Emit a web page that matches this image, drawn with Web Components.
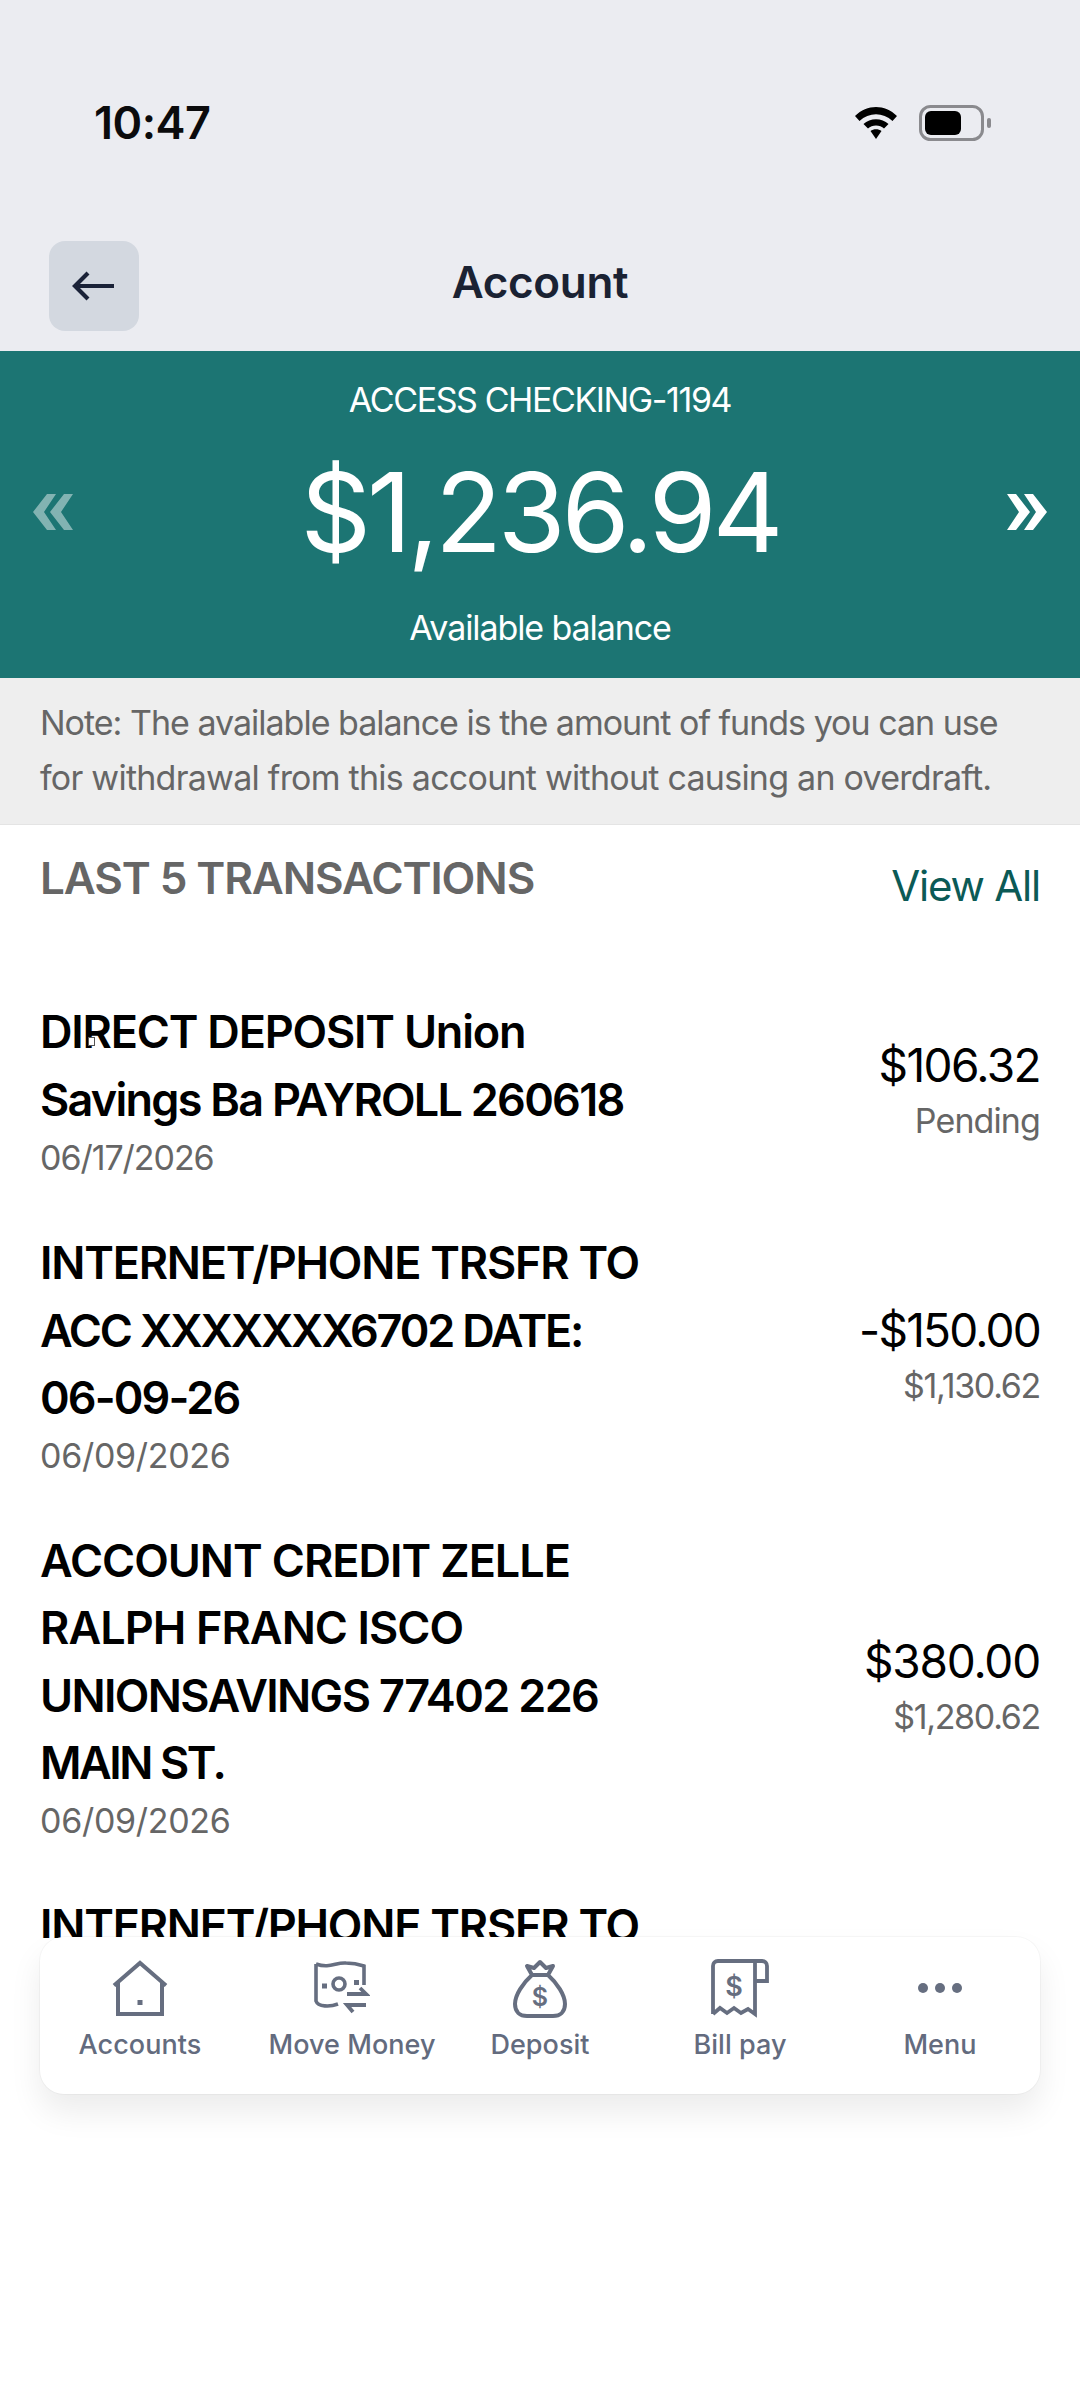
<!DOCTYPE html>
<html lang="en">
<head>
<meta charset="utf-8">
<title>Account</title>
<style>
html,body{margin:0;padding:0;background:#fff}
body{font-family:Inter,"Liberation Sans",sans-serif;width:1080px;height:2404px;overflow:hidden}
</style>
</head>
<body>
<app-screen>
  <status-bar></status-bar>
  <nav-header>Account</nav-header>
  <balance-banner account="ACCESS CHECKING-1194" amount="$1,236.94" label="Available balance"></balance-banner>
  <note-box><span style="letter-spacing:-1px">Note: The available balance is the amount of funds you can use</span><br>for withdrawal from this account without causing an overdraft.</note-box>
  <tx-list>
    <tx-row amount="$106.32" sub="Pending" date="06/17/2026" style="--pb:48.500px;--dl:-1.05px;--al:-1.6px;--sl:-.9px" caret><span style="letter-spacing:-1.2px">DIRECT DEPOSIT Union</span><br><span style="letter-spacing:-1.75px">Savings Ba PAYROLL 260618</span></tx-row>
    <tx-row amount="-$150.00" sub="$1,130.62" date="06/09/2026" style="--al:-1.8px"><span style="letter-spacing:-1.23px">INTERNET/PHONE TRSFR TO</span><br><span style="letter-spacing:-2.16px">ACC XXXXXXX6702 DATE:</span><br><span style="letter-spacing:-1.9px">06-09-26</span></tx-row>
    <tx-row amount="$380.00" sub="$1,280.62" date="06/09/2026"><span style="letter-spacing:-1.04px">ACCOUNT CREDIT ZELLE</span><br><span style="letter-spacing:-.93px">RALPH FRANC ISCO</span><br><span style="letter-spacing:-1.64px">UNIONSAVINGS 77402 226</span><br><span style="letter-spacing:-2.46px">MAIN ST.</span></tx-row>
    <tx-row><span style="letter-spacing:-1.23px">INTERNET/PHONE TRSFR TO</span></tx-row>
  </tx-list>
  <bottom-nav>
    <nav-item label="Accounts"><svg viewBox="0 0 60 60" width="60" height="60" fill="none" stroke="#666e80" stroke-width="4"><path d="M4 26.500 30 4l26 22.500M8 23v32h44V23"/><rect x="27.500" y="41" width="5" height="5" fill="#666e80" stroke="none"/></svg></nav-item>
    <nav-item label="Move Money" shift><svg viewBox="0 0 60 60" width="60" height="60" fill="none" stroke="#666e80" stroke-width="3.600"><path d="M6 5c14 5 20-2 30-1 6 0 12 1 18 3v19M6 5v37c2 6 14 6 22 3"/><circle cx="29" cy="25" r="6"/><rect x="12" y="24.500" width="5" height="5" fill="#666e80" stroke="none"/><rect x="44" y="21" width="5" height="5" fill="#666e80" stroke="none"/><path d="M37 35h19l-6-6M56 46H37l6 7" stroke-width="3.800"/></svg></nav-item>
    <nav-item label="Deposit"><svg viewBox="0 0 60 60" width="60" height="60" fill="none" stroke="#666e80" stroke-width="4" stroke-linejoin="round"><path d="M22 16 17 7l7 2 6-6 6 6 7-2-5 9zM22 16C13 24 5 36 5 45c0 8 5 12 12 12h26c7 0 12-4 12-12 0-9-8-21-17-29"/><text x="30" y="47" text-anchor="middle" font-family="Inter,sans-serif" font-size="25" font-weight="600" fill="#666e80" stroke="none">$</text></svg></nav-item>
    <nav-item label="Bill pay"><svg viewBox="0 0 60 60" width="60" height="60" fill="none" stroke="#666e80" stroke-width="3.800"><path d="M3 55V7c0-3 2-5 5-5h44c3 0 5 2 5 5v15H45M45 3v52l-7-5-7 4-7-5-7 5-7-5-7 6"/><text x="24" y="37" text-anchor="middle" font-family="Inter,sans-serif" font-size="27" font-weight="600" fill="#666e80" stroke="none">$</text></svg></nav-item>
    <nav-item label="Menu"><svg viewBox="0 0 60 60" width="60" height="60" fill="#666e80"><circle cx="13" cy="29" r="5"/><circle cx="30" cy="29" r="5"/><circle cx="47" cy="29" r="5"/></svg></nav-item>
  </bottom-nav>
</app-screen>
<script>
function def(name, css, html){
  customElements.define(name, class extends HTMLElement{
    connectedCallback(){
      if(this.shadowRoot) return;
      const r=this.attachShadow({mode:'open'});
      const get=k=>this.getAttribute(k)||'';
      r.innerHTML='<style>'+css+'</style>'+(typeof html==='function'?html(get,this):html);
    }
  });
}
def('app-screen',':host{display:block;position:relative;width:1080px;height:2404px;overflow:hidden;background:#fff;color:#000}','<slot></slot>');
def('status-bar',`:host{display:flex;align-items:center;justify-content:space-between;height:241px;box-sizing:border-box;padding:4px 89px 0 94px;background:#ebecf1}
.t{font-size:45px;font-weight:600;color:#0b0b0d;letter-spacing:-.5px;line-height:1}
.r{display:flex;align-items:center;gap:21px}svg{display:block}`,
`<span class="t">10:47</span><span class="r">
<svg width="44" height="34" viewBox="0 0 44 34"><path d="M1 10C13-2 31-2 43 10l-4.500 5C29 6 15 6 5.500 15z" fill="#000"/><path d="M9.500 18C16 11.500 28 11.500 34.500 18L30 22.500C26 18.500 18 18.500 14 22.500z" fill="#000"/><path d="M16.500 25c3-2.500 8-2.500 11 0L22 33z" fill="#000"/></svg>
<svg width="72" height="36" viewBox="0 0 72 36"><rect x="1.500" y="1.500" width="62" height="33" rx="10" fill="none" stroke="#8a8a8e" stroke-width="3"/><rect x="6" y="6" width="36" height="24" rx="6" fill="#000"/><rect x="68" y="13" width="4" height="10" rx="2" fill="#8a8a8e"/></svg></span>`);
def('nav-header',`:host{display:grid;grid-template-columns:90px 1fr 90px;align-items:center;height:110px;box-sizing:border-box;padding:0 49px 20px;background:#ebecf1;color:#1a2233;font-size:44px;font-weight:600;letter-spacing:-.3px}
.b{width:90px;height:90px;border-radius:16px;background:#d3d8e0;display:flex;align-items:center;justify-content:center}
.c{text-align:center;transform:translateY(-4px)}`,
`<div class="b"><svg width="44" height="30" viewBox="0 0 44 30" fill="none" stroke="#1a2238" stroke-width="4.200"><path d="M42 15H4M16 2 3 15l13 13"/></svg></div><div class="c"><slot></slot></div><div></div>`);
def('balance-banner',`:host{display:block;height:327px;background:#1c7573;color:#fff;text-align:center}
.a{padding-top:27px;font-size:34px;line-height:44px;letter-spacing:-1.400px}
.row{display:flex;align-items:center;justify-content:space-between;padding:0 33px;height:130px;margin-top:25px}
.m{font-size:110px;line-height:130px;letter-spacing:-4.200px;font-weight:400}
.l{margin-top:29px;font-size:34px;line-height:44px;letter-spacing:-1.100px}
svg{display:block}`,
(g)=>`<div class="a">${g('account')}</div><div class="row"><svg width="40" height="36" viewBox="0 0 40 36" fill="#fff" opacity=".45"><path d="M14 0h9L11 18l12 18h-9L0 18zM31 0h9L28 18l12 18h-9L17 18z"/></svg><span class="m">${g('amount')}</span><svg width="40" height="36" viewBox="0 0 40 36" fill="#fff"><path d="M9 0H0l12 18L0 36h9l14-18zM26 0h-9l12 18-12 18h9l14-18z"/></svg></div><div class="l">${g('label')}</div>`);
def('note-box',`:host{display:block;height:147px;box-sizing:border-box;padding:17px 40px 0;background:#eee;color:#666;font-size:34px;line-height:55px;letter-spacing:-.75px;border-bottom:1px solid #e4e4e4;white-space:nowrap}`,'<slot></slot>');
def('tx-list',`:host{display:block;padding:0 40px;height:1113px;overflow:hidden}
.h{display:flex;justify-content:space-between;align-items:flex-start;height:173px}
.t{font-size:44px;line-height:50px;font-weight:600;color:#666;letter-spacing:-1.100px;padding-top:28px}
.v{font-size:42px;line-height:50px;color:#0b5a56;letter-spacing:-1.200px;padding-top:36px}`,
`<div class="h"><span class="t">LAST 5 TRANSACTIONS</span><span class="v">View All</span></div><slot></slot>`);
def('tx-row',`:host{display:flex;justify-content:space-between;align-items:center;padding-bottom:var(--pb,47.500px);position:relative}
.d{font-size:45px;line-height:67.500px;font-weight:600;white-space:nowrap;color:#000}
.dt{font-size:34px;line-height:46px;color:#666;letter-spacing:var(--dl,-.3px);margin-top:1.500px}
.r{text-align:right;margin-top:3px}
.a{font-size:46px;line-height:56px;letter-spacing:var(--al,-1.200px)}
.s{font-size:34px;line-height:46px;color:#666;letter-spacing:var(--sl,-1.300px);margin-top:5px}
.c{position:absolute;left:48px;top:39px;width:5px;height:7px;background:#fff;border:1px solid #555}`,
(g,el)=>`<div><div class="d"><slot></slot></div>${g('date')?`<div class="dt">${g('date')}</div>`:''}</div>${g('amount')?`<div class="r"><div class="a">${g('amount')}</div><div class="s">${g('sub')}</div></div>`:''}${el.hasAttribute('caret')?'<i class="c"></i>':''}`);
def('bottom-nav',`:host{position:absolute;left:40px;top:1937px;width:1000px;height:157px;box-sizing:border-box;display:grid;grid-template-columns:repeat(5,1fr);background:#fff;border-radius:24px;box-shadow:0 0 0 1px rgba(0,0,0,.03),0 18px 32px rgba(0,0,0,.08)}`,'<slot></slot>');
def('nav-item',`:host{display:flex;flex-direction:column;align-items:center;padding-top:22px;color:#636b7e;font-size:27px;font-weight:500;letter-spacing:.05px}
svg,::slotted(svg){display:block}
.l{margin-top:9px;line-height:34px;white-space:nowrap}
.s{padding-left:24px}`,
(g,el)=>`<slot></slot><div class="l ${el.hasAttribute('shift')?'s':''}">${g('label')}</div>`);
</script>
</body>
</html>
